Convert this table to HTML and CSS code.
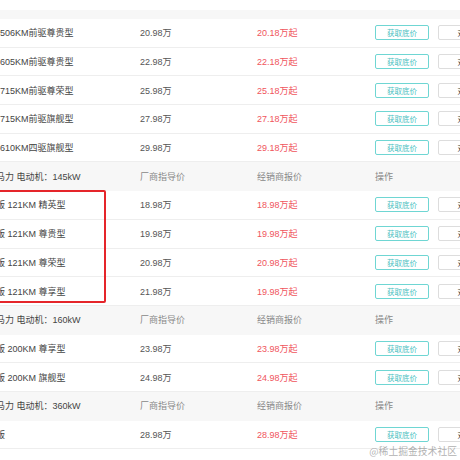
FILE: index.html
```html
<!DOCTYPE html>
<html lang="zh">
<head>
<meta charset="utf-8">
<link rel="stylesheet" href="styles.css">
</head>
<body>
<div class="page">
  <div class="topgap"></div>
  <div class="topband"></div>
  <div class="table">
    <div class="row"><div class="name">506KM前驱尊贵型</div><div class="guide">20.98万</div><div class="deal">20.18万起</div><div class="ops"><span class="btn">获取底价</span><span class="btn2">对比</span></div></div>
    <div class="row"><div class="name">605KM前驱尊贵型</div><div class="guide">22.98万</div><div class="deal">22.18万起</div><div class="ops"><span class="btn">获取底价</span><span class="btn2">对比</span></div></div>
    <div class="row"><div class="name">715KM前驱尊荣型</div><div class="guide">25.98万</div><div class="deal">25.18万起</div><div class="ops"><span class="btn">获取底价</span><span class="btn2">对比</span></div></div>
    <div class="row"><div class="name">715KM前驱旗舰型</div><div class="guide">27.98万</div><div class="deal">27.18万起</div><div class="ops"><span class="btn">获取底价</span><span class="btn2">对比</span></div></div>
    <div class="row"><div class="name">610KM四驱旗舰型</div><div class="guide">29.98万</div><div class="deal">29.18万起</div><div class="ops"><span class="btn">获取底价</span><span class="btn2">对比</span></div></div>
    <div class="row head"><div class="name clip">马力 电动机：145kW</div><div class="guide">厂商指导价</div><div class="hd">经销商报价</div><div class="hd">操作</div></div>
    <div class="row"><div class="name clip">版 121KM 精英型</div><div class="guide">18.98万</div><div class="deal">18.98万起</div><div class="ops"><span class="btn">获取底价</span><span class="btn2">对比</span></div></div>
    <div class="row"><div class="name clip">版 121KM 尊贵型</div><div class="guide">19.98万</div><div class="deal">19.98万起</div><div class="ops"><span class="btn">获取底价</span><span class="btn2">对比</span></div></div>
    <div class="row"><div class="name clip">版 121KM 尊荣型</div><div class="guide">20.98万</div><div class="deal">20.98万起</div><div class="ops"><span class="btn">获取底价</span><span class="btn2">对比</span></div></div>
    <div class="row"><div class="name clip">版 121KM 尊享型</div><div class="guide">21.98万</div><div class="deal">19.98万起</div><div class="ops"><span class="btn">获取底价</span><span class="btn2">对比</span></div></div>
    <div class="row head"><div class="name clip">马力 电动机：160kW</div><div class="guide">厂商指导价</div><div class="hd">经销商报价</div><div class="hd">操作</div></div>
    <div class="row"><div class="name clip">版 200KM 尊享型</div><div class="guide">23.98万</div><div class="deal">23.98万起</div><div class="ops"><span class="btn">获取底价</span><span class="btn2">对比</span></div></div>
    <div class="row"><div class="name clip">版 200KM 旗舰型</div><div class="guide">24.98万</div><div class="deal">24.98万起</div><div class="ops"><span class="btn">获取底价</span><span class="btn2">对比</span></div></div>
    <div class="row head"><div class="name clip">马力 电动机：360kW</div><div class="guide">厂商指导价</div><div class="hd">经销商报价</div><div class="hd">操作</div></div>
    <div class="row"><div class="name clip">版</div><div class="guide">28.98万</div><div class="deal">28.98万起</div><div class="ops"><span class="btn">获取底价</span><span class="btn2">对比</span></div></div>
  </div>
  <div class="mark"></div>
  <div class="watermark">@稀土掘金技术社区</div>
</div>
</body>
</html>
```

FILE: styles.css
```css
html, body {
  margin: 0;
  padding: 0;
  background: #fff;
}
.page {
  position: relative;
  width: 460px;
  height: 460px;
  overflow: hidden;
  font-family: "Liberation Sans", "Noto Sans CJK SC", sans-serif;
  font-size: 9px;
  color: #444;
}
.topgap {
  height: 10px;
}
.topband {
  height: 9px;
  background: #f7f7f7;
}
.row {
  display: grid;
  grid-template-columns: 140px 117px 118px 1fr;
  align-items: center;
  height: 28.7px;
  box-sizing: border-box;
  border-bottom: 1px solid #eeeeee;
  white-space: nowrap;
}
.row.head {
  background: #f7f7f7;
  border-bottom-color: #f7f7f7;
}
.name {
  color: #444;
}
.name.clip {
  margin-left: -4px;
}
.guide {
  color: #555;
}
.head .guide, .hd {
  color: #888;
}
.deal {
  color: #f0545c;
}
.ops {
  display: flex;
  gap: 9px;
  align-items: center;
}
.btn, .btn2 {
  box-sizing: border-box;
  width: 54px;
  height: 15px;
  border-radius: 2px;
  font-size: 7.5px;
  display: flex;
  align-items: center;
  justify-content: center;
  flex-shrink: 0;
}
.btn {
  border: 1px solid #6fd6d3;
  color: #4bbfbf;
}
.btn2 {
  border: 1px solid #dddddd;
  color: #333;
}
.mark {
  position: absolute;
  left: -6px;
  top: 190px;
  width: 112px;
  height: 113px;
  box-sizing: border-box;
  border: 2px solid #e5252a;
  border-radius: 2px;
}
.watermark {
  position: absolute;
  right: 3px;
  top: 444px;
  font-size: 9.8px;
  color: rgba(150, 150, 150, 0.75);
  font-family: "Noto Sans CJK SC", sans-serif;
  line-height: 14px;
}
```
